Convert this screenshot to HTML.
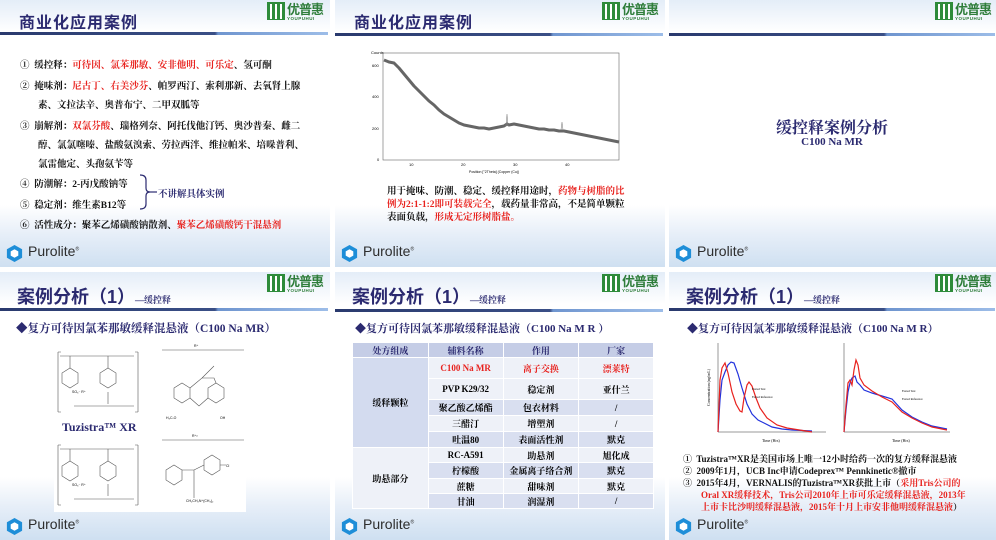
<!DOCTYPE html>
<html><head><meta charset="utf-8">
<style>
*{margin:0;padding:0;box-sizing:border-box}
body{width:996px;height:540px;background:#fff;position:relative;overflow:hidden;font-family:"Liberation Serif","Noto Serif CJK SC",serif}
.s{position:absolute;width:330px;height:267px;overflow:hidden;background:linear-gradient(#e4edf8 0px,#fff 32px,#fff 205px,#e6eef8 235px,#cfe0f1 267px)}
.t{position:absolute;left:19px;top:9px;font-family:"Liberation Sans","Noto Sans CJK SC",sans-serif;font-size:16px;color:#2b2a70;font-weight:bold;letter-spacing:1px}
.t2{position:absolute;left:17px;top:11px;font-family:"Liberation Sans","Noto Sans CJK SC",sans-serif;font-size:18px;color:#2b2a70;font-weight:bold}
.t2 small{font-family:"Liberation Serif","Noto Serif CJK SC",serif;font-size:9px}
.ln{position:absolute;left:0;width:328px;height:3px;background:linear-gradient(90deg,#2a3a6e 0,#3a4f86 215px,#6f95cf 218px,#9dbde8 328px)}
.logo{position:absolute;left:267px;top:2px;width:60px;height:20px}
.logo .b{position:absolute;left:0;top:0;width:18px;height:18px;background:#2e8b3a}
.logo .b i{position:absolute;top:2px;width:2px;height:15px;background:#fff}
.logo .c{position:absolute;left:20px;top:-3px;font-family:"Noto Sans CJK SC",sans-serif;font-size:13px;color:#2e7d3a;font-weight:bold;letter-spacing:-1px}
.logo .e{position:absolute;left:20px;top:14px;font-family:"Liberation Sans",sans-serif;font-size:4.5px;color:#2e7d3a;font-weight:bold;letter-spacing:.5px}
.pur{position:absolute;left:5px;top:244px}
.pur svg{position:absolute;left:0;top:0}
.pur span{position:absolute;left:23px;top:-1px;font-family:"Liberation Sans",sans-serif;font-size:14px;color:#2d2d2d;white-space:nowrap}
.p{position:absolute;font-size:9.5px;font-weight:bold;color:#111;white-space:nowrap}
.r{color:#e8221e}
.n{color:#2b2a70}
.sub{position:absolute;left:17px;top:48px;font-size:11.5px;font-weight:bold;color:#2b2a70;white-space:nowrap}
table{position:absolute;left:17px;top:70px;border-collapse:collapse;font-size:9px;font-weight:bold;text-align:center}
td{border:1px solid #fff;padding:0}
.h td{background:#c5cde6;color:#2b2a70;height:15px}
.a td{background:#eef1f8}
.bb td{background:#d9dff0}
.m{background:#d3dbef!important}
</style></head><body>

<!-- Slide 1 -->
<div class="s" style="left:0;top:0">
<div class="t">商业化应用案例</div>
<div class="ln" style="top:32px"></div>
<div class="logo"><div class="b"><i style="left:3px"></i><i style="left:8px"></i><i style="left:13px"></i></div><div class="c">优普惠</div><div class="e">YOUPUHUI</div></div>
<div class="p" style="left:20px;top:57px">①&nbsp; 缓控释：<span class="r">可待因、氯苯那敏、安非他明、可乐定</span>、氢可酮</div>
<div class="p" style="left:20px;top:78px">②&nbsp; 掩味剂：<span class="r">尼古丁、右美沙芬</span>、帕罗西汀、索利那新、去氧肾上腺</div>
<div class="p" style="left:38px;top:97px">素、文拉法辛、奥普布宁、二甲双胍等</div>
<div class="p" style="left:20px;top:118px">③&nbsp; 崩解剂：<span class="r">双氯芬酸</span>、瑞格列奈、阿托伐他汀钙、奥沙普秦、雌二</div>
<div class="p" style="left:38px;top:137px">醇、氯氯噻嗪、盐酸氨溴索、劳拉西泮、维拉帕米、培哚普利、</div>
<div class="p" style="left:38px;top:156px">氯雷他定、头孢氨苄等</div>
<div class="p" style="left:20px;top:176px">④&nbsp; 防潮解：2-丙戊酸钠等</div>
<div class="p" style="left:20px;top:197px">⑤&nbsp; 稳定剂：维生素B12等</div>
<svg style="position:absolute;left:138px;top:174px" width="20" height="36"><path d="M2 1 Q8 1 8 6 L8 14 Q8 18 12 18 Q8 18 8 22 L8 30 Q8 35 2 35" fill="none" stroke="#2b2a70" stroke-width="1.2"/><line x1="12" y1="18" x2="19" y2="18" stroke="#2b2a70" stroke-width="1.2"/></svg>
<div class="p n" style="left:158px;top:186px">不讲解具体实例</div>
<div class="p" style="left:20px;top:217px">⑥&nbsp; 活性成分：聚苯乙烯磺酸钠散剂、<span class="r">聚苯乙烯磺酸钙干混悬剂</span></div>
<div class="pur"><svg width="19" height="19" viewBox="0 0 20 20"><polygon points="10,1 18,5.5 18,14.5 10,19 2,14.5 2,5.5" fill="#1e8ed8"/><polygon points="10,5.5 14,7.8 14,12.2 10,14.5 6,12.2 6,7.8" fill="#fff"/></svg><span>Purolite<sup style="font-size:5px">®</sup></span></div>
</div>

<!-- Slide 2 -->
<div class="s" style="left:335px;top:0">
<div class="t">商业化应用案例</div>
<div class="ln" style="top:33px"></div>
<div class="logo"><div class="b"><i style="left:3px"></i><i style="left:8px"></i><i style="left:13px"></i></div><div class="c">优普惠</div><div class="e">YOUPUHUI</div></div>
<svg style="position:absolute;left:34px;top:48px" width="255" height="130" viewBox="0 0 255 130">
<rect x="0" y="0" width="255" height="130" fill="#fff"/>
<text x="2" y="6" font-size="4" font-family="Liberation Sans">Counts</text>
<rect x="14" y="5" width="236" height="107" fill="none" stroke="#666" stroke-width=".6"/>
<text x="3" y="19" font-size="4" font-family="Liberation Sans">600</text>
<text x="3" y="50" font-size="4" font-family="Liberation Sans">400</text>
<text x="3" y="82" font-size="4" font-family="Liberation Sans">200</text>
<text x="8" y="113" font-size="4" font-family="Liberation Sans">0</text>
<text x="40" y="118" font-size="4" font-family="Liberation Sans">10</text>
<text x="92" y="118" font-size="4" font-family="Liberation Sans">20</text>
<text x="144" y="118" font-size="4" font-family="Liberation Sans">30</text>
<text x="196" y="118" font-size="4" font-family="Liberation Sans">40</text>
<text x="100" y="125" font-size="3.5" font-family="Liberation Sans">Position [°2Theta] (Copper (Cu))</text>
<polyline fill="none" stroke="#666" stroke-width="3" stroke-linejoin="round" points="15,12 20,14 25,15 30,20 35,26 40,32 45,38 50,43 55,48 60,53 65,57 70,62 75,66 80,69 85,72 90,75 95,77 100,78 105,79 110,80 115,80 120,81 125,80 130,79 135,78 138,76 140,77 145,76 150,77 155,78 160,79 165,80 170,81 175,81 180,82 185,82 190,83 195,83 200,84 205,85 210,86 215,87 220,88 225,89 230,90 235,91 240,92 245,93 250,94"/>
<polyline fill="none" stroke="#888" stroke-width=".6" points="137,78 138,66 139,78 M192,82"/>
<polyline fill="none" stroke="#888" stroke-width=".6" points="192,82 193,74 194,82"/>
</svg>
<div class="p" style="left:52px;top:183px;font-size:9.5px">用于掩味、防潮、稳定、缓控释用途时，<span class="r">药物与树脂的比</span></div>
<div class="p" style="left:52px;top:196px;font-size:9.5px"><span class="r">例为2:1-1:2即可装载完全</span>，载药量非常高，不是简单颗粒</div>
<div class="p" style="left:52px;top:209px;font-size:9.5px">表面负载，<span class="r">形成无定形树脂盐。</span></div>
<div class="pur"><svg width="19" height="19" viewBox="0 0 20 20"><polygon points="10,1 18,5.5 18,14.5 10,19 2,14.5 2,5.5" fill="#1e8ed8"/><polygon points="10,5.5 14,7.8 14,12.2 10,14.5 6,12.2 6,7.8" fill="#fff"/></svg><span>Purolite<sup style="font-size:5px">®</sup></span></div>
</div>

<!-- Slide 3 -->
<div class="s" style="left:669px;top:0;width:327px">
<div class="ln" style="top:33px;width:326px"></div>
<div class="logo" style="left:266px"><div class="b"><i style="left:3px"></i><i style="left:8px"></i><i style="left:13px"></i></div><div class="c">优普惠</div><div class="e">YOUPUHUI</div></div>
<div class="p n" style="left:0;width:326px;text-align:center;top:115px;font-size:16px">缓控释案例分析</div>
<div class="p n" style="left:0;width:326px;text-align:center;top:136px;font-size:11px">C100 Na MR</div>
<div class="pur"><svg width="19" height="19" viewBox="0 0 20 20"><polygon points="10,1 18,5.5 18,14.5 10,19 2,14.5 2,5.5" fill="#1e8ed8"/><polygon points="10,5.5 14,7.8 14,12.2 10,14.5 6,12.2 6,7.8" fill="#fff"/></svg><span>Purolite<sup style="font-size:5px">®</sup></span></div>
</div>

<!-- Slide 4 -->
<div class="s" style="left:0;top:272px;height:268px">
<div class="t2">案例分析（1）<small>—缓控释</small></div>
<div class="ln" style="top:36px"></div>
<div class="logo"><div class="b"><i style="left:3px"></i><i style="left:8px"></i><i style="left:13px"></i></div><div class="c">优普惠</div><div class="e">YOUPUHUI</div></div>
<div class="sub" style="left:16px">◆复方可待因氯苯那敏缓释混悬液（C100 Na MR）</div>
<svg style="position:absolute;left:54px;top:68px" width="192" height="172" viewBox="0 0 192 172" font-family="Liberation Sans" font-size="3.5">
<rect width="192" height="172" fill="#fff"/>
<g fill="none" stroke="#555" stroke-width=".6">
<path d="M4 12 V72 M4 12 h3 M4 72 h3 M84 12 V72 M84 12 h-3 M84 72 h-3"/>
<path d="M6 16 H80 M16 16 v12 M54 16 v12 M54 64 v-12 M20 66 H80"/>
<polygon points="16,28 24,33 24,43 16,48 8,43 8,33"/><polygon points="54,28 62,33 62,43 54,48 46,43 46,33"/>
<path d="M4 105 V165 M4 105 h3 M4 165 h3 M84 105 V165 M84 105 h-3 M84 165 h-3"/>
<path d="M6 109 H80 M16 109 v12 M54 109 v12 M54 156 v-12 M20 159 H80"/>
<polygon points="16,121 24,126 24,136 16,141 8,136 8,126"/><polygon points="54,121 62,126 62,136 54,141 46,136 46,126"/>
<path d="M108 10 H190 M108 100 H190"/>
<polygon points="120,48 128,43 136,48 136,58 128,63 120,58"/><polygon points="154,48 162,43 170,48 170,58 162,63 154,58"/>
<path d="M136 48 L148 38 L160 38 L162 43 M136 58 L145 66 L154 58 M148 38 L160 26"/>
<polygon points="112,130 120,125 128,130 128,140 120,145 112,140"/><polygon points="150,120 158,115 166,120 166,130 158,135 150,130"/>
<path d="M128 130 H140 M140 130 L150 125 M140 130 V158 M166 125 H172"/>
</g>
<text x="18" y="53">SO₃⁻ R⁺</text><text x="18" y="146">SO₃⁻ R⁺</text>
<text x="140" y="7">R⁺</text><text x="138" y="97">R⁺²</text>
<text x="112" y="79">H₃C-O</text><text x="166" y="79">OH</text><text x="172" y="127">Cl</text><text x="132" y="162">CH₂CH₂N⁺(CH₃)₂</text>
</svg>
<div class="p n" style="left:62px;top:148px;font-size:12px">Tuzistra™ XR</div>
<div class="pur" style="top:245px"><svg width="19" height="19" viewBox="0 0 20 20"><polygon points="10,1 18,5.5 18,14.5 10,19 2,14.5 2,5.5" fill="#1e8ed8"/><polygon points="10,5.5 14,7.8 14,12.2 10,14.5 6,12.2 6,7.8" fill="#fff"/></svg><span>Purolite<sup style="font-size:5px">®</sup></span></div>
</div>

<!-- Slide 5 -->
<div class="s" style="left:335px;top:272px;height:268px">
<div class="t2">案例分析（1）<small>—缓控释</small></div>
<div class="ln" style="top:37px"></div>
<div class="logo"><div class="b"><i style="left:3px"></i><i style="left:8px"></i><i style="left:13px"></i></div><div class="c">优普惠</div><div class="e">YOUPUHUI</div></div>
<div class="sub" style="left:20px;font-size:11px">◆复方可待因氯苯那敏缓释混悬液（C100 Na M R ）</div>
<table style="width:302px">
<colgroup><col style="width:76px"><col style="width:75px"><col style="width:76px"><col style="width:75px"></colgroup>
<tr class="h"><td>处方组成</td><td>辅料名称</td><td>作用</td><td>厂家</td></tr>
<tr class="a"><td rowspan="5" class="m">缓释颗粒</td><td class="r" style="height:21px">C100 Na MR</td><td class="r">离子交换</td><td class="r">漂莱特</td></tr>
<tr class="a"><td style="height:21px">PVP K29/32</td><td>稳定剂</td><td>亚什兰</td></tr>
<tr class="bb"><td style="height:16px">聚乙酸乙烯酯</td><td>包衣材料</td><td>/</td></tr>
<tr class="a"><td style="height:16px">三醋汀</td><td>增塑剂</td><td>/</td></tr>
<tr class="bb"><td style="height:16px">吐温80</td><td>表面活性剂</td><td>默克</td></tr>
<tr class="a"><td rowspan="4" style="background:#eef1f8">助悬部分</td><td style="height:15px">RC-A591</td><td>助悬剂</td><td>旭化成</td></tr>
<tr class="bb"><td style="height:16px">柠檬酸</td><td>金属离子络合剂</td><td>默克</td></tr>
<tr class="a"><td style="height:15px">蔗糖</td><td>甜味剂</td><td>默克</td></tr>
<tr class="bb"><td style="height:15px">甘油</td><td>润湿剂</td><td>/</td></tr>
</table>
<div class="pur" style="top:245px"><svg width="19" height="19" viewBox="0 0 20 20"><polygon points="10,1 18,5.5 18,14.5 10,19 2,14.5 2,5.5" fill="#1e8ed8"/><polygon points="10,5.5 14,7.8 14,12.2 10,14.5 6,12.2 6,7.8" fill="#fff"/></svg><span>Purolite<sup style="font-size:5px">®</sup></span></div>
</div>

<!-- Slide 6 -->
<div class="s" style="left:669px;top:272px;width:327px;height:268px">
<div class="t2">案例分析（1）<small>—缓控释</small></div>
<div class="ln" style="top:36px;width:326px"></div>
<div class="logo" style="left:266px"><div class="b"><i style="left:3px"></i><i style="left:8px"></i><i style="left:13px"></i></div><div class="c">优普惠</div><div class="e">YOUPUHUI</div></div>
<div class="sub" style="left:18px;font-size:11px">◆复方可待因氯苯那敏缓释混悬液（C100 Na M R）</div>
<svg style="position:absolute;left:33px;top:68px" width="128" height="105" viewBox="0 0 128 105" font-family="Liberation Serif" font-size="3">
<path d="M16 3 V92 H124" fill="none" stroke="#333" stroke-width=".5"/>
<polyline fill="none" stroke="#2233dd" stroke-width="1.2" points="16,92 18,60 20,40 23,32 26,25 29,22 32,23 36,34 40,48 45,64 50,74 56,80 62,83 70,87 80,89 90,90 110,91"/>
<polyline fill="none" stroke="#e8221e" stroke-width="1.2" points="16,92 18,40 20,28 23,23 26,33 30,52 34,64 38,71 40,72 42,58 45,45 47,42 50,46 54,58 58,68 65,78 75,85 85,88 110,92"/>
<text x="2" y="60" transform="rotate(-90 8 60)" font-size="4">Concentration (ng/mL)</text>
<text x="60" y="102" font-size="4">Time (Hrs)</text>
<text x="50" y="50">Fasted Test</text><text x="50" y="58">Fasted Reference</text>
</svg>
<svg style="position:absolute;left:163px;top:68px" width="122" height="105" viewBox="0 0 122 105" font-family="Liberation Serif" font-size="3">
<path d="M12 3 V92 H118" fill="none" stroke="#333" stroke-width=".5"/>
<polyline fill="none" stroke="#2233dd" stroke-width="1.2" points="12,92 14,70 16,52 18,43 20,38 23,36 25,42 28,45 32,50 40,53 50,56 60,59 70,70 80,77 90,82 100,86 115,89"/>
<polyline fill="none" stroke="#e8221e" stroke-width="1.2" points="12,92 14,65 16,43 18,40 20,45 22,30 24,20 26,25 28,38 32,45 40,51 50,57 60,62 70,72 80,78 90,83 100,87 115,90"/>
<text x="60" y="102" font-size="4">Time (Hrs)</text>
<text x="70" y="52">Fasted Test</text><text x="70" y="60">Fasted Reference</text>
</svg>
<div class="p" style="left:14px;top:180px;font-size:9px">①&nbsp; Tuzistra™XR是美国市场上唯一12小时给药一次的复方缓释混悬液</div>
<div class="p" style="left:14px;top:192px;font-size:9px">②&nbsp; 2009年1月，UCB Inc申请Codeprex™ Pennkinetic®撤市</div>
<div class="p" style="left:14px;top:204px;font-size:9px">③&nbsp; 2015年4月，VERNALIS的Tuzistra™XR获批上市（<span class="r">采用Tris公司的</span></div>
<div class="p r" style="left:32px;top:216px;font-size:9px">Oral XR缓释技术，Tris公司2010年上市可乐定缓释混悬液，2013年</div>
<div class="p" style="left:32px;top:228px;font-size:9px"><span class="r">上市卡比沙明缓释混悬液，2015年十月上市安非他明缓释混悬液</span>）</div>
<div class="pur" style="top:245px"><svg width="19" height="19" viewBox="0 0 20 20"><polygon points="10,1 18,5.5 18,14.5 10,19 2,14.5 2,5.5" fill="#1e8ed8"/><polygon points="10,5.5 14,7.8 14,12.2 10,14.5 6,12.2 6,7.8" fill="#fff"/></svg><span>Purolite<sup style="font-size:5px">®</sup></span></div>
</div>
</body></html>
